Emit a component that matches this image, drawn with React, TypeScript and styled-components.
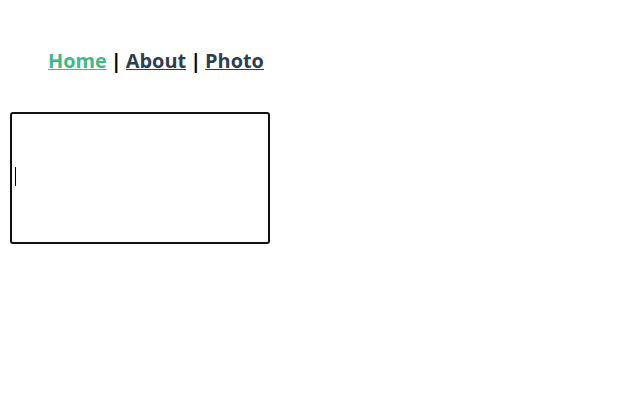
import React from "react";
import styled, { createGlobalStyle } from "styled-components";

const GlobalStyle = createGlobalStyle`
  body {
    margin: 0;
    background: #ffffff;
    font-family: "Open Sans", "Liberation Sans", sans-serif;
  }
`;

const Page = styled.div`
  padding: 10px;
`;

const Nav = styled.nav`
  padding: 37px 0 0 38px;
  height: 64px;
  box-sizing: border-box;
  font-size: 19.9px;
  font-weight: bold;
  line-height: 27px;
  color: #000000;
  display: flex;
  gap: 4px;
`;

const NavLink = styled.a<{ $active?: boolean }>`
  color: ${(p) => (p.$active ? "#42b983" : "#2c3e50")};
  text-decoration: underline;
  cursor: pointer;
`;

const EditorWrap = styled.div`
  position: relative;
  margin-top: 38px;
  width: 260px;
  height: 132px;
`;

const Editor = styled.input`
  display: block;
  width: 100%;
  height: 100%;
  box-sizing: border-box;
  border: 2px solid #111111;
  border-radius: 3px;
  padding: 0 3px;
  font-size: 16px;
  font-family: "Liberation Sans", sans-serif;
  outline: none;
  caret-color: transparent;
`;

const Caret = styled.span`
  position: absolute;
  left: 5px;
  top: 55px;
  width: 1px;
  height: 19px;
  background: #000000;
  pointer-events: none;
`;

const App = () => {
  return (
    <Page>
      <GlobalStyle />
      <Nav>
        <NavLink $active>Home</NavLink>
        <span>|</span>
        <NavLink>About</NavLink>
        <span>|</span>
        <NavLink>Photo</NavLink>
      </Nav>
      <EditorWrap>
        <Editor />
        <Caret />
      </EditorWrap>
    </Page>
  );
};

export default App;
